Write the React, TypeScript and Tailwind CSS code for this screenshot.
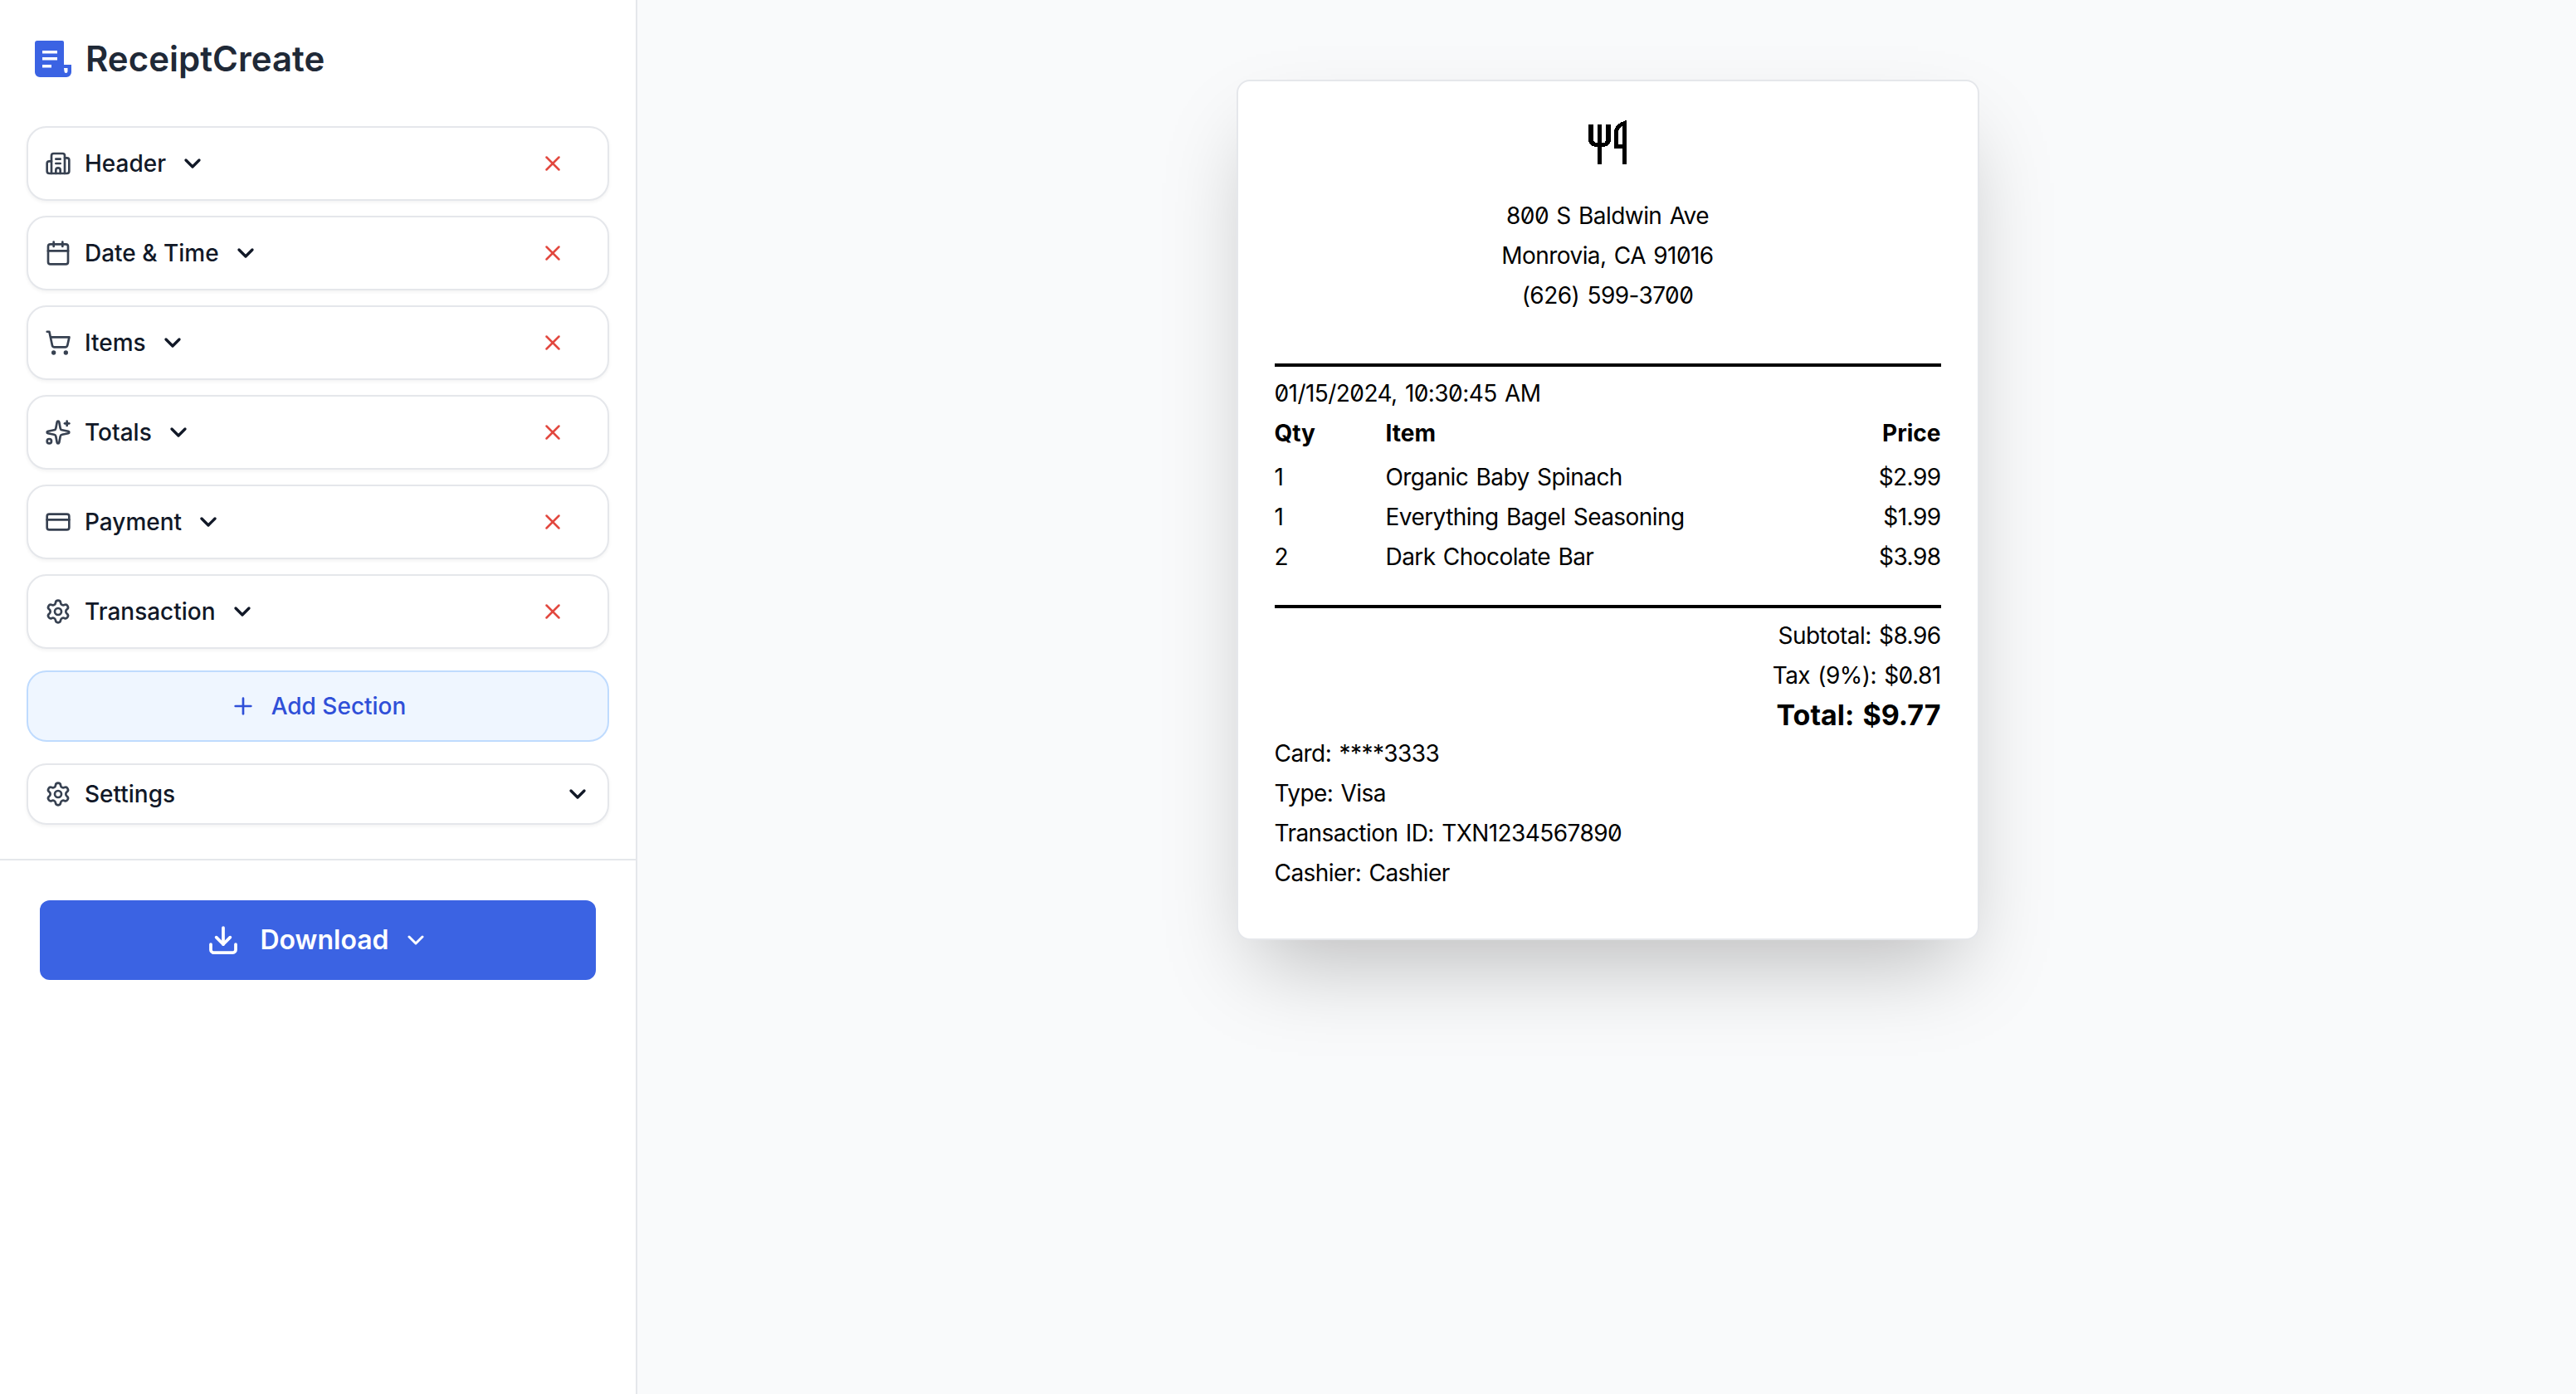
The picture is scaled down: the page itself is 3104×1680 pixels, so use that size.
import { Building2, Calendar, ShoppingCart, Sparkles, CreditCard, Settings, ChevronDown, X, Plus, Download } from "lucide-react";

const sections = [
  { label: "Header", Icon: Building2 },
  { label: "Date & Time", Icon: Calendar },
  { label: "Items", Icon: ShoppingCart },
  { label: "Totals", Icon: Sparkles },
  { label: "Payment", Icon: CreditCard },
  { label: "Transaction", Icon: Settings },
];

const items = [
  ["1", "Organic Baby Spinach", "$2.99"],
  ["1", "Everything Bagel Seasoning", "$1.99"],
  ["2", "Dark Chocolate Bar", "$3.98"],
];

function Logo() {
  return (
    <svg width="44" height="44" viewBox="0 0 44 44" className="shrink-0 mt-[5px]">
      <path fill="#3b63e3" d="M3 0H33a2 2 0 0 1 2 2V29H44V38a6 6 0 0 1-6 6H6a6 6 0 0 1-6-6V3a3 3 0 0 1 3-3Z" />
      <path fill="#fff" d="M9 12H27V15.500H9ZM9 20H27V23.500H9ZM9 29H20V32.500H9ZM35 33H39.500V37a2 2 0 0 1-4 0Z" />
    </svg>
  );
}

function Cutlery() {
  return (
    <svg width="48" height="54" viewBox="0 0 48 54" className="block" shapeRendering="crispEdges">
      <path fill="#000" d="M0 5H6V22Q6 27 9 27H11V5H16V27H18Q21 27 21 22V5H27V23Q27 32 16 32V53H11V32Q0 32 0 23Z" />
      <path fill="#000" d="M46 0V53H41V34H31V15Q31 4 46 0ZM41 7Q36 9 36 16V29H41Z" fillRule="evenodd" />
    </svg>
  );
}

export default function App() {
  return (
    <div className="flex h-screen w-full bg-[#f9fafb] font-['Inter',sans-serif] overflow-hidden">
      <aside className="w-[768px] shrink-0 h-full bg-white border-r-2 border-[#e5e7eb] flex flex-col">
        <div className="flex items-start gap-[17px] pl-[42px] pt-[44px] h-[152px]">
          <Logo />
          <h1 className="text-[42px] leading-[56px] font-semibold text-[#1f2937] -mt-[1px]">ReceiptCreate</h1>
        </div>
        <div className="px-[32px] flex flex-col gap-[18px]">
          {sections.map(({ label, Icon }) => (
            <div key={label} className="h-[90px] rounded-[24px] border-2 border-[#e5e7eb] bg-white shadow-[0_2px_4px_rgba(0,0,0,0.05)] flex items-center pl-[20px] pr-[51px]">
              <Icon size={32} strokeWidth={2} className="text-[#374151] shrink-0" />
              <span className="ml-[16px] text-[28px] font-medium text-[#111827] leading-none">{label}</span>
              <ChevronDown size={32} strokeWidth={2.5} className="ml-[16px] text-[#111827]" />
              <X size={30} strokeWidth={2} className="ml-auto text-[#e2483f]" />
            </div>
          ))}
        </div>
        <div className="px-[32px] mt-[26px]">
          <div className="h-[86px] rounded-[24px] border-2 border-[#bfdbfe] bg-[#eff6ff] flex items-center justify-center gap-[18px] text-[#2f4fd8]">
            <Plus size={32} strokeWidth={2} />
            <span className="text-[28px] font-medium leading-none">Add Section</span>
          </div>
        </div>
        <div className="px-[32px] mt-[26px]">
          <div className="h-[74px] rounded-[24px] border-2 border-[#e5e7eb] bg-white shadow-[0_2px_4px_rgba(0,0,0,0.05)] flex items-center pl-[20px] pr-[20px]">
            <Settings size={32} strokeWidth={2} className="text-[#374151] shrink-0" />
            <span className="ml-[16px] text-[28px] font-medium text-[#111827] leading-none">Settings</span>
            <ChevronDown size={32} strokeWidth={2.5} className="ml-auto text-[#111827]" />
          </div>
        </div>
        <div className="mt-[41px] border-t-2 border-[#e5e7eb] pt-[48px] px-[48px]">
          <div className="h-[96px] rounded-[12px] bg-[#3b63e3] flex items-center justify-center text-white">
            <Download size={40} strokeWidth={2.25} />
            <span className="ml-[24px] text-[32px] font-semibold leading-none">Download</span>
            <ChevronDown size={32} strokeWidth={2.25} className="ml-[16px]" />
          </div>
        </div>
      </aside>
      <main className="flex-1 flex justify-center items-start pt-[96px] pl-[2px]">
        <div className="w-[895px] h-[1037px] rounded-[16px] border-2 border-[#e5e7eb] bg-white shadow-[0_50px_100px_-24px_rgba(0,0,0,0.25)] px-[44px] text-[28px] leading-[48px] text-black tracking-[-0.02em] [word-spacing:2px] slashed-zero">
          <div className="flex justify-center pt-[47px] pl-[2px]"><Cutlery /></div>
          <div className="text-center mt-[37px]">
            <div>800 S Baldwin Ave</div>
            <div>Monrovia, CA 91016</div>
            <div>(626) 599-3700</div>
          </div>
          <div className="h-[4px] bg-black mt-[58px]" />
          <div className="mt-[8px]">01/15/2024, 10:30:45 AM</div>
          <div className="grid grid-cols-[134px_1fr_auto] font-bold tracking-normal">
            <div>Qty</div>
            <div>Item</div>
            <div>Price</div>
          </div>
          <div className="mt-[5px] grid grid-cols-[134px_1fr_auto]">
            {items.map(([q, n, p]) => (
              <div key={n} className="contents">
                <div>{q}</div>
                <div>{n}</div>
                <div className="text-right">{p}</div>
              </div>
            ))}
          </div>
          <div className="h-[4px] bg-black mt-[34px]" />
          <div className="mt-[9px] text-right">
            <div>Subtotal: $8.96</div>
            <div>Tax (9%): $0.81</div>
            <div className="text-[34px] font-bold tracking-normal">Total: $9.77</div>
          </div>
          <div className="-mt-[2px]">
            <div>Card: ****3333</div>
            <div>Type: Visa</div>
            <div>Transaction ID: TXN1234567890</div>
            <div>Cashier: Cashier</div>
          </div>
        </div>
      </main>
    </div>
  );
}
